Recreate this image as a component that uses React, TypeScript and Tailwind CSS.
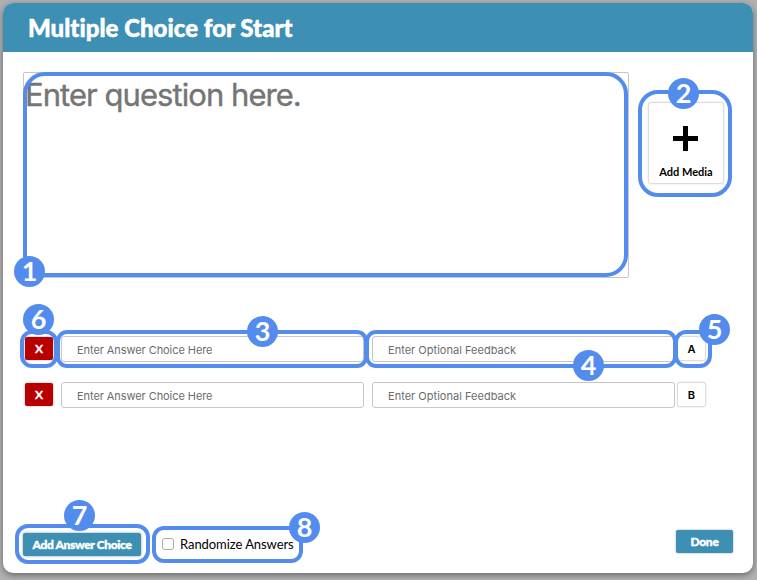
const badges = [
  { n: 1, at: "left-[14px] top-[256px]" },
  { n: 2, at: "left-[668px] top-[78px]" },
  { n: 3, at: "left-[247px] top-[316px]" },
  { n: 4, at: "left-[573px] top-[350px]" },
  { n: 5, at: "left-[699px] top-[314px]" },
  { n: 6, at: "left-[23px] top-[304px]" },
  { n: 7, at: "left-[64px] top-[500px]" },
  { n: 8, at: "left-[289px] top-[512px]" },
];

const outlines = [
  "left-[23px] top-[72px] w-[605px] h-[205px] rounded-[22px]",
  "left-[638px] top-[90px] w-[94px] h-[107px] rounded-[20px]",
  "left-[56px] top-[330px] w-[312px] h-[38px] rounded-[11px]",
  "left-[365px] top-[330px] w-[312px] h-[38px] rounded-[11px]",
  "left-[674px] top-[330px] w-[38px] h-[38px] rounded-[12px]",
  "left-[20px] top-[330px] w-[38px] h-[38px] rounded-[12px]",
  "left-[15px] top-[524px] w-[135px] h-[40px] rounded-[13px]",
  "left-[152px] top-[526px] w-[151px] h-[37px] rounded-[12px]",
];

function AnswerRow({ letter }: { letter: string }) {
  const field =
    "h-[26px] w-[303px] rounded-[3px] border border-[#c6c6c6] bg-white pl-[15px] pt-px font-[Inter,sans-serif] text-[11px] text-[#555] outline-none placeholder:text-[#6c6c6c] placeholder:opacity-100";
  return (
    <div className="flex h-[27px] items-start">
      <button className="mt-px h-[23px] w-[28px] rounded-[2px] bg-[#b90000] text-[12px] font-bold leading-[24px] text-white shadow-[0_0_2px_#999] [-webkit-text-stroke:0.3px_white]">
        X
      </button>
      <input className={`${field} ml-2 tracking-[-0.07px]`} placeholder="Enter Answer Choice Here" />
      <input className={`${field} ml-2 tracking-[0.02px]`} placeholder="Enter Optional Feedback" />
      <button className="ml-[2px] h-[25px] w-[29px] rounded-[3px] border border-[#ddd] bg-white pt-px font-[Inter,sans-serif] text-[11px] font-semibold leading-[23px] text-black shadow-[0_0_2px_#ddd]">
        {letter}
      </button>
    </div>
  );
}

export default function App() {
  return (
    <div className="relative h-[580px] w-[757px] overflow-hidden bg-[#b1b1b1] pl-[3px] pt-[3px] font-[Lato,sans-serif]">
      <main className="flex h-[570px] w-[750px] flex-col overflow-hidden rounded-[10px] bg-white shadow-[0_2px_6px_#666]">
        <header className="flex h-[49px] shrink-0 items-center bg-[#3d8fb3] pl-[25px]">
          <h1 className="whitespace-nowrap text-[24px] font-black leading-none tracking-[0.02px] text-white [-webkit-text-stroke:0.5px_white]">
            Multiple Choice for Start
          </h1>
        </header>

        <section className="flex items-start pl-[20px] pt-[20px]">
          <textarea
            className="h-[206px] w-[606px] resize-none rounded-[2px] border border-[#c6c6c6] pl-[1px] pt-[2px] font-[Inter,sans-serif] text-[31px] leading-[40px] tracking-[-0.95px] outline-none [-webkit-text-stroke:0.4px_#757575] placeholder:text-[#757575] placeholder:opacity-100"
            placeholder="Enter question here."
          />
          <button className="ml-[19px] mt-[30px] flex h-[82px] w-[76px] flex-col items-center rounded-[3px] border border-[#ddd] bg-white pt-[23px] shadow-[0_0_2px_#ddd]">
            <svg className="mr-px size-[25px]" viewBox="0 0 25 25">
              <path d="M12.5 0V25M0 12.5H25" stroke="#000" strokeWidth="5" />
            </svg>
            <span className="mt-[14px] whitespace-nowrap text-[11px] font-bold leading-[14px] text-black">Add Media</span>
          </button>
        </section>

        <section className="flex flex-col gap-[19px] pl-[22px] pt-[58px]">
          <AnswerRow letter="A" />
          <AnswerRow letter="B" />
        </section>

        <footer className="mb-[17px] mt-auto flex h-[26px] items-start pl-[20px] pr-[20px]">
          <button className="mt-[3px] h-[23px] w-[118px] whitespace-nowrap rounded-[2px] bg-[#3d8fb3] text-[12px] font-black leading-[23px] tracking-[-0.35px] text-white shadow-[0_0_3px_#999] [-webkit-text-stroke:0.4px_white]">
            Add Answer Choice
          </button>
          <label className="ml-[21px] mt-[5px] flex h-[18px] items-center gap-[6px] whitespace-nowrap text-[13px] leading-[18px] tracking-[-0.06px] text-black">
            <input type="checkbox" className="size-[12px] appearance-none rounded-[3px] border border-[#aaa] bg-white" />
            Randomize Answers
          </label>
          <button className="ml-auto h-[23px] w-[57px] rounded-[2px] bg-[#3d8fb3] text-[12px] font-black leading-[23px] tracking-[-0.3px] text-white shadow-[0_0_2px_#999] [-webkit-text-stroke:0.4px_white]">
            Done
          </button>
        </footer>
      </main>

      <div className="pointer-events-none absolute inset-0">
        {outlines.map((o) => (
          <div key={o} className={`absolute border-4 border-[#548ced] ${o}`} />
        ))}
        {badges.map((b) => (
          <div
            key={b.n}
            className={`absolute flex size-[31px] items-center justify-center rounded-full bg-[#548ced] pb-[2px] text-[27px] font-bold leading-none text-white ${b.at}`}
          >
            {b.n}
          </div>
        ))}
      </div>
    </div>
  );
}
